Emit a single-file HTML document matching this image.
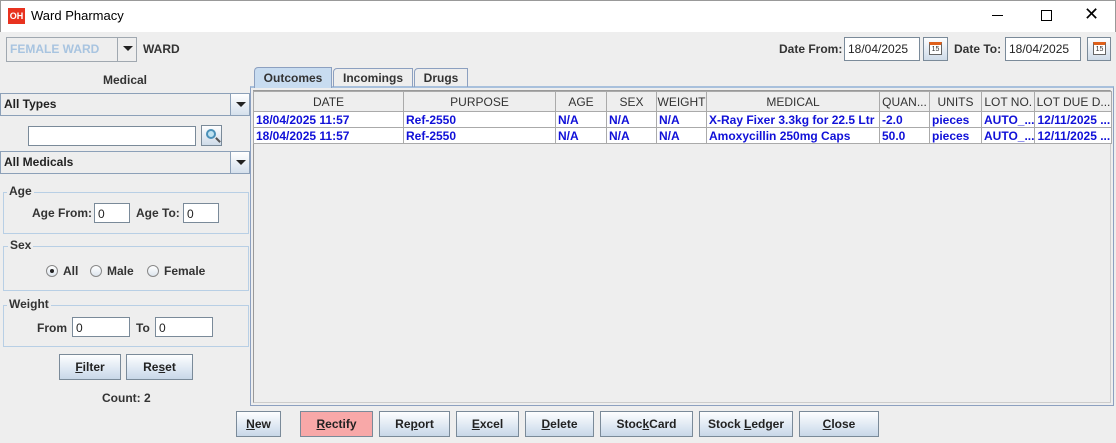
<!DOCTYPE html>
<html><head><style>
*{box-sizing:border-box;margin:0;padding:0}
body{width:1116px;height:443px;background:#eeeeee;font:bold 12px "Liberation Sans",sans-serif;color:#333;position:relative;overflow:hidden}
.a{position:absolute}
.tb{left:0;top:0;width:1116px;height:32px;background:#fff;border:1px solid #999;border-bottom:none}
.fld{background:#fff;border:1px solid #7a8a99;font-weight:normal;color:#222;padding-left:3px;line-height:20px}
.btn{border:1px solid #7a8a99;background:linear-gradient(#fdfeff,#dde7f2 60%,#c8d7e8);text-align:center;line-height:24px;color:#222}
.combo{background:#eeeeee;border:1px solid #8ca0b8;padding-left:3px;line-height:20px;color:#222}
.arr{position:absolute;right:0;top:0;bottom:0;width:19px;border-left:1px solid #8ca0b8;background:linear-gradient(#fff,#d5e0ec)}
.arr:after{content:"";position:absolute;left:5px;top:8px;border:5px solid transparent;border-top:5px solid #222;border-bottom:none}
.grp{border:1px solid #b8cfe5}
.gl{background:#eeeeee;padding:0 2px;color:#333}
.cal{background:linear-gradient(#fdfeff,#cfdbe8);border:1px solid #7a8a99}
.cal i{position:absolute;left:5px;top:4px;width:13px;height:13px;border:1px solid #666;background:#fff;border-top:3px solid #e0601a;font:normal 7px "Liberation Sans";text-align:center;line-height:9px;color:#333}
table{border-collapse:collapse;position:absolute;left:253px;top:91px;table-layout:fixed}
td{border:1px solid #aaa;height:16px;white-space:nowrap;overflow:hidden;padding-left:2px;color:#1010d8;font-size:12px}
th{border:1px solid #aaa;height:20px;font-weight:normal;background:#eeeeee;color:#333;white-space:nowrap;overflow:hidden}
tr.r td{background:#fff}
u{text-decoration:underline}
.rad{display:inline-block;width:12px;height:12px;border:1px solid #888;border-radius:50%;background:linear-gradient(#fff,#dde5ee);vertical-align:-2px;margin-right:5px;position:relative}
</style></head><body>
<div class="a tb"></div>
<div class="a" style="left:8px;top:8px;width:17px;height:16px;background:#e8321f;color:#fff;font-size:9px;line-height:16px;text-align:center">OH</div>
<div class="a" style="left:31px;top:8px;font-weight:normal;font-size:13px;color:#000">Ward Pharmacy</div>
<div class="a" style="left:992px;top:15px;width:11px;height:1px;background:#000"></div>
<div class="a" style="left:1041px;top:10px;width:11px;height:11px;border:1px solid #000"></div>
<div class="a" style="left:1084px;top:4px;font-weight:normal;font-size:18px;color:#000">✕</div>

<div class="a combo" style="left:6px;top:37px;width:131px;height:25px;color:#a8c4e0;line-height:23px;border-color:#a0a8b0">FEMALE WARD<div class="arr" style="width:19px;background:#eee;border-color:#a0a8b0"></div></div>
<div class="a" style="left:143px;top:42px">WARD</div>
<div class="a" style="left:103px;top:73px">Medical</div>
<div class="a combo" style="left:0;top:93px;width:250px;height:23px">All Types<div class="arr"></div></div>
<div class="a fld" style="left:28px;top:126px;width:168px;height:20px"></div>
<div class="a cal" style="left:201px;top:125px;width:21px;height:21px"><div class="a" style="left:4px;top:3px;width:10px;height:10px;border:2px solid #4a90b8;border-radius:50%;background:#bfe3f2"></div><div class="a" style="left:13px;top:13px;width:6px;height:2px;background:#555;transform:rotate(45deg)"></div></div>
<div class="a combo" style="left:0;top:151px;width:250px;height:23px">All Medicals<div class="arr"></div></div>

<div class="a grp" style="left:3px;top:192px;width:246px;height:42px"></div>
<div class="a gl" style="left:7px;top:184px">Age</div>
<div class="a" style="left:32px;top:206px">Age From:</div>
<div class="a fld" style="left:94px;top:203px;width:36px;height:20px">0</div>
<div class="a" style="left:136px;top:206px">Age To:</div>
<div class="a fld" style="left:183px;top:203px;width:36px;height:20px">0</div>

<div class="a grp" style="left:3px;top:246px;width:246px;height:45px"></div>
<div class="a gl" style="left:8px;top:238px">Sex</div>
<div class="a" style="left:46px;top:264px"><span class="rad"><span class="a" style="left:3px;top:3px;width:4px;height:4px;border-radius:50%;background:#222"></span></span>All</div>
<div class="a" style="left:90px;top:264px"><span class="rad"></span>Male</div>
<div class="a" style="left:147px;top:264px"><span class="rad"></span>Female</div>

<div class="a grp" style="left:3px;top:305px;width:246px;height:42px"></div>
<div class="a gl" style="left:7px;top:297px">Weight</div>
<div class="a" style="left:37px;top:321px">From</div>
<div class="a fld" style="left:72px;top:317px;width:58px;height:20px">0</div>
<div class="a" style="left:136px;top:321px">To</div>
<div class="a fld" style="left:155px;top:317px;width:58px;height:20px">0</div>
<div class="a btn" style="left:59px;top:354px;width:62px;height:26px"><u>F</u>ilter</div>
<div class="a btn" style="left:126px;top:354px;width:67px;height:26px">Re<u>s</u>et</div>
<div class="a" style="left:102px;top:391px">Count: 2</div>

<div class="a" style="left:779px;top:42px">Date From:</div>
<div class="a fld" style="left:844px;top:37px;width:76px;height:24px;line-height:22px">18/04/2025</div>
<div class="a cal" style="left:923px;top:37px;width:25px;height:24px"><i>15</i></div>
<div class="a" style="left:954px;top:42px">Date To:</div>
<div class="a fld" style="left:1005px;top:37px;width:76px;height:24px;line-height:22px">18/04/2025</div>
<div class="a cal" style="left:1087px;top:37px;width:24px;height:24px"><i>15</i></div>

<div class="a" style="left:250px;top:86px;width:864px;height:320px;border:1px solid #8ca0c0;border-top:2px solid #a8c0dc"></div>
<div class="a" style="left:254px;top:67px;width:78px;height:21px;background:#c8dcf0;border:1px solid #8ca0c0;border-bottom:none;border-radius:4px 0 0 0;text-align:center;line-height:20px">Outcomes</div>
<div class="a" style="left:333px;top:68px;width:80px;height:19px;border:1px solid #8ca0c0;border-bottom:none;border-radius:4px 0 0 0;text-align:center;line-height:18px">Incomings</div>
<div class="a" style="left:414px;top:68px;width:54px;height:19px;border:1px solid #8ca0c0;border-bottom:none;border-radius:4px 0 0 0;text-align:center;line-height:18px">Drugs</div>
<div class="a" style="left:253px;top:90px;width:858px;height:313px;border:1px solid #aaa;border-color:#999 #ccc #ccc #999"></div>
<table>
<colgroup><col style="width:150px"><col style="width:152px"><col style="width:51px"><col style="width:50px"><col style="width:50px"><col style="width:173px"><col style="width:50px"><col style="width:52px"><col style="width:52px"><col style="width:77px"></colgroup>
<tr><th>DATE</th><th>PURPOSE</th><th>AGE</th><th>SEX</th><th>WEIGHT</th><th>MEDICAL</th><th>QUAN...</th><th>UNITS</th><th>LOT NO.</th><th>LOT DUE D...</th></tr>
<tr class="r"><td>18/04/2025 11:57</td><td>Ref-2550</td><td>N/A</td><td>N/A</td><td>N/A</td><td>X-Ray Fixer 3.3kg for 22.5 Ltr</td><td>-2.0</td><td>pieces</td><td>AUTO_...</td><td>12/11/2025 ...</td></tr>
<tr class="r"><td>18/04/2025 11:57</td><td>Ref-2550</td><td>N/A</td><td>N/A</td><td>N/A</td><td>Amoxycillin 250mg Caps</td><td>50.0</td><td>pieces</td><td>AUTO_...</td><td>12/11/2025 ...</td></tr>
</table>

<div class="a btn" style="left:236px;top:411px;width:45px;height:26px"><u>N</u>ew</div>
<div class="a btn" style="left:300px;top:411px;width:73px;height:26px;background:#f8a8a8"><u>R</u>ectify</div>
<div class="a btn" style="left:379px;top:411px;width:71px;height:26px">Re<u>p</u>ort</div>
<div class="a btn" style="left:456px;top:411px;width:63px;height:26px"><u>E</u>xcel</div>
<div class="a btn" style="left:525px;top:411px;width:69px;height:26px"><u>D</u>elete</div>
<div class="a btn" style="left:600px;top:411px;width:93px;height:26px">Stoc<u>k</u>Card</div>
<div class="a btn" style="left:699px;top:411px;width:94px;height:26px">Stock <u>L</u>edger</div>
<div class="a btn" style="left:799px;top:411px;width:80px;height:26px"><u>C</u>lose</div>
</body></html>
